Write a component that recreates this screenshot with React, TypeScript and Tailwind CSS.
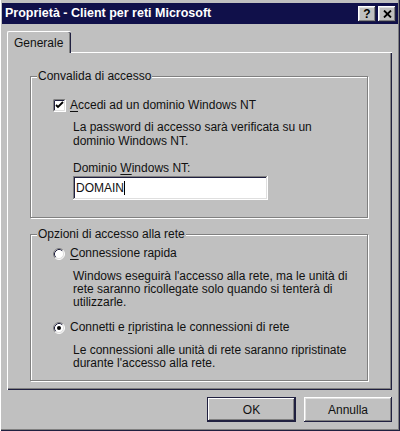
const raised =
  "shadow-[inset_-1px_-1px_#202040,inset_1px_1px_#fff,inset_-2px_-2px_#808080,inset_2px_2px_#dfdfdf]";
const etched = "border border-[#808080] shadow-[inset_1px_1px_#fff,1px_1px_#fff]";

function Checkbox() {
  return (
    <svg width="13" height="13" viewBox="0 0 13 13" className="shrink-0">
      <rect x="0" y="0" width="13" height="13" fill="#fff" />
      <path d="M0.5 12.5V0.5H12.5" stroke="#808080" fill="none" />
      <path d="M1.5 11.5V1.5H11.5" stroke="#202040" fill="none" />
      <path d="M1.5 11.5H11.5V1.5" stroke="#dfdfdf" fill="none" />
      <path d="M3 6l2 2 5-5" stroke="#000" strokeWidth="1.8" fill="none" />
    </svg>
  );
}

function Radio({ checked }: { checked?: boolean }) {
  return (
    <svg width="12" height="12" viewBox="0 0 12 12" className="shrink-0">
      <circle cx="6" cy="6" r="5" fill="#fff" />
      <path d="M2.11 9.89A5.5 5.5 0 0 1 9.89 2.11" stroke="#808080" fill="none" />
      <path d="M9.89 2.11A5.5 5.5 0 0 1 2.11 9.89" stroke="#fff" fill="none" />
      <path d="M2.82 9.18A4.5 4.5 0 0 1 9.18 2.82" stroke="#202040" fill="none" />
      <path d="M9.18 2.82A4.5 4.5 0 0 1 2.82 9.18" stroke="#dfdfdf" fill="none" />
      {checked && <circle cx="6" cy="6" r="2" fill="#000" />}
    </svg>
  );
}

function Group({
  label,
  className,
  children,
}: {
  label: string;
  className: string;
  children: React.ReactNode;
}) {
  return (
    <div className={`relative w-[338px] ${etched} ${className}`}>
      <span className="absolute -top-[8px] left-[6px] px-[1px] bg-[#c0c0c0] leading-[14px]">
        {label}
      </span>
      {children}
    </div>
  );
}

export default function App() {
  return (
    <div className="w-[400px] h-[431px] bg-[#c0c0c0] pt-[3px] font-['Liberation_Sans',Arial,sans-serif] text-[12px] text-[#111] shadow-[inset_1px_0_#fff,inset_-1px_-1px_#202040,inset_-2px_-2px_#808080] overflow-hidden">
      {/* title bar */}
      <div className="mx-[2px] h-[21px] bg-[#10104a] flex items-center justify-between pl-[3px] pr-[2px]">
        <span className="text-white font-bold text-[12.5px]">Proprietà - Client per reti Microsoft</span>
        <div className="flex gap-[2px]">
          <div className={`w-[18px] h-[16px] bg-[#c0c0c0] ${raised} flex items-center justify-center font-bold text-[12px] text-black`}>
            ?
          </div>
          <div className={`w-[18px] h-[16px] bg-[#c0c0c0] ${raised} flex items-center justify-center`}>
            <svg width="9" height="8" viewBox="0 0 9 8">
              <path d="M1 0.5l7 7M8 0.5l-7 7" stroke="#000" strokeWidth="1.8" />
            </svg>
          </div>
        </div>
      </div>

      {/* tabs */}
      <div className="mt-[7px] pl-[7px] pr-[8px]">
        <div className="relative z-10 -mb-px w-[64px] h-[22px] bg-[#c0c0c0] border-l border-t border-white rounded-tl-[2px] rounded-tr-[2px] shadow-[inset_-1px_0_#202040,inset_-2px_0_#808080] pl-[6px] pt-[5px] leading-[13px]">
          Generale
        </div>
        <div className="h-[338px] border-l border-t border-white shadow-[inset_-1px_-1px_#202040,inset_-2px_-2px_#808080] pl-[22px] pt-[23px]">
          <Group label="Convalida di accesso" className="h-[142px] pl-[22px] pt-[22px]">
            <div className="flex items-center gap-[4px] h-[13px]">
              <Checkbox />
              <span className="leading-[13px]">
                <u className="underline-offset-2">A</u>ccedi ad un dominio Windows NT
              </span>
            </div>
            <div className="ml-[20px] mt-[8px] leading-[14px]">
              <div>La password di accesso sarà verificata su un</div>
              <div>dominio Windows NT.</div>
            </div>
            <div className="ml-[20px] mt-[14px] leading-[13px]">
              Dominio <u className="underline-offset-2">W</u>indows NT:
            </div>
            <div className="ml-[20px] mt-[1px] w-[195px] h-[24px] bg-white shadow-[inset_-1px_-1px_#fff,inset_1px_1px_#808080,inset_-2px_-2px_#dfdfdf,inset_2px_2px_#202040] flex items-center pl-[3px] leading-[13px]">
              <span>DOMAIN</span>
              <span className="w-px h-[14px] bg-black" />
            </div>
          </Group>

          <Group label="Opzioni di accesso alla rete" className="mt-[16px] h-[147px] pl-[22px] pt-[12px]">
            <div className="flex items-center gap-[5px] h-[13px]">
              <Radio />
              <span className="leading-[13px]">
                <u className="underline-offset-2">C</u>onnessione rapida
              </span>
            </div>
            <div className="ml-[20px] mt-[10px] leading-[13px]">
              <div>Windows eseguirà l'accesso alla rete, ma le unità di</div>
              <div>rete saranno ricollegate solo quando si tenterà di</div>
              <div>utilizzarle.</div>
            </div>
            <div className="mt-[12px] flex items-center gap-[5px] h-[13px]">
              <Radio checked />
              <span className="leading-[13px]">
                Connetti e <u className="underline-offset-2">r</u>ipristina le connessioni di rete
              </span>
            </div>
            <div className="ml-[20px] mt-[10px] leading-[13px]">
              <div>Le connessioni alle unità di rete saranno ripristinate</div>
              <div>durante l'accesso alla rete.</div>
            </div>
          </Group>
        </div>

        {/* buttons */}
        <div className="mt-[7px] flex justify-end gap-[8px]">
          <button className="w-[89px] h-[25px] bg-[#c0c0c0] border border-[#202040] shadow-[inset_-1px_-1px_#202040,inset_1px_1px_#fff,inset_-2px_-2px_#808080]">
            OK
          </button>
          <button className={`w-[88px] h-[25px] bg-[#c0c0c0] ${raised}`}>Annulla</button>
        </div>
      </div>
    </div>
  );
}
